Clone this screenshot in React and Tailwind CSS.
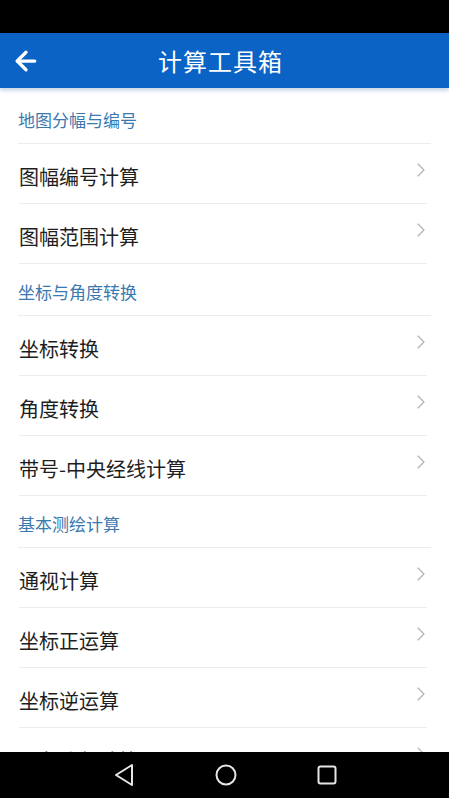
import React from 'react';
import { ArrowLeft, ChevronRight } from 'lucide-react';

const sections = [
  { title: '地图分幅与编号', items: ['图幅编号计算', '图幅范围计算'] },
  { title: '坐标与角度转换', items: ['坐标转换', '角度转换', '带号-中央经线计算'] },
  { title: '基本测绘计算', items: ['通视计算', '坐标正运算', '坐标逆运算', '三角边长计算'] },
];

const font = { fontFamily: '"Noto Sans CJK SC", "Noto Sans", sans-serif' };

const SectionHeader = ({ title }) => (
  <div className="mx-[18px] h-[52px] flex items-end pb-[11px] border-b border-[#ececec]">
    <span className="text-[17px] leading-6 text-[#3a78b0]">{title}</span>
  </div>
);

const Row = ({ label }) => (
  <div className="ml-[19px] mr-[22px] h-[60px] flex items-center justify-between border-b border-[#ececec]">
    <span className="pt-[6px] text-[20px] leading-7 text-[#1e1e1e]">{label}</span>
    <ChevronRight size={24} strokeWidth={1.1} className="text-[#b0b0b0] -mr-[6px] mb-[8px]" />
  </div>
);

const NavBar = () => (
  <div className="h-[46px] bg-black flex items-center justify-center gap-[80px] shrink-0">
    <svg width="22" height="24" viewBox="0 0 22 24" fill="none" stroke="#e6e6e6" strokeWidth="2" strokeLinejoin="round">
      <path d="M19 2 L3 12 L19 22 Z" />
    </svg>
    <svg width="22" height="22" viewBox="0 0 22 22" fill="none" stroke="#e6e6e6" strokeWidth="2">
      <circle cx="11" cy="11" r="9.5" />
    </svg>
    <svg width="20" height="20" viewBox="0 0 20 20" fill="none" stroke="#e6e6e6" strokeWidth="2">
      <rect x="1.5" y="1.5" width="17" height="17" rx="2" />
    </svg>
  </div>
);

export default function App() {
  return (
    <div className="w-[449px] h-[798px] flex flex-col bg-white overflow-hidden" style={font}>
      <div className="h-[33px] bg-black shrink-0" />
      <header className="relative h-[55px] bg-[#0b63c6] flex items-center justify-center shrink-0 shadow-[0_3px_3px_rgba(120,150,190,0.35)] z-10">
        <ArrowLeft size={30} strokeWidth={2.6} className="absolute left-[11px] text-white" />
        <h1 className="text-[24px] text-white tracking-[1px] pr-2">计算工具箱</h1>
      </header>
      <div className="flex-1 overflow-hidden pt-1">
        {sections.map((s) => (
          <div key={s.title}>
            <SectionHeader title={s.title} />
            {s.items.map((it) => (
              <Row key={it} label={it} />
            ))}
          </div>
        ))}
      </div>
      <NavBar />
    </div>
  );
}
